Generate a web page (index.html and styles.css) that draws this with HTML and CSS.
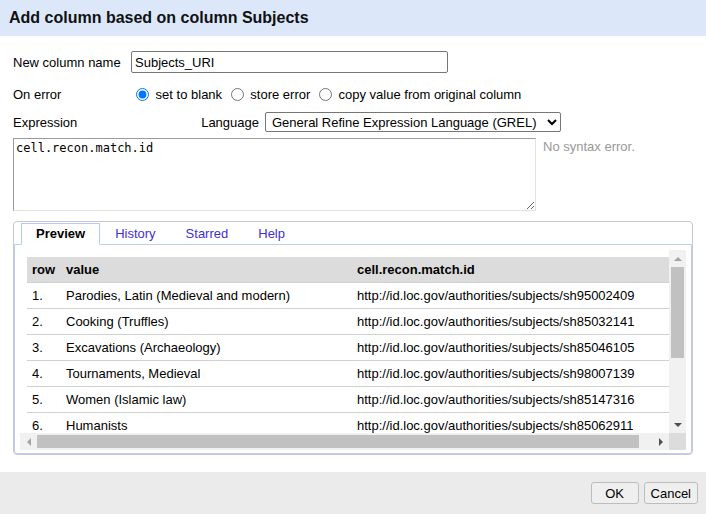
FILE: index.html
```html
<!DOCTYPE html>
<html>
<head>
<meta charset="utf-8">
<title>Add column</title>
<link rel="stylesheet" href="styles.css">
</head>
<body>
<div class="dialog">
  <div class="dialog-header">Add column based on column Subjects</div>
  <div class="dialog-body">
    <div class="form-row row-name">
      <label class="field-label">New column name</label>
      <input class="name-input" type="text" value="Subjects_URI">
    </div>
    <div class="form-row row-error">
      <span class="field-label">On error</span>
      <span class="radios"><input type="radio" name="onerror" checked> set to blank <input type="radio" name="onerror"> store error <input type="radio" name="onerror"> copy value from original column</span>
    </div>
    <div class="form-row row-expr">
      <span class="field-label">Expression</span>
      <span class="lang-group">
        <span class="lang-label">Language</span>
        <select class="lang-select"><option>General Refine Expression Language (GREL)</option></select>
      </span>
    </div>
    <div class="expr-row">
      <textarea class="expr-input" spellcheck="false">cell.recon.match.id</textarea>
      <span class="expr-status">No syntax error.</span>
    </div>
    <div class="tabs">
      <div class="tab-nav">
        <span class="tab tab-active">Preview</span>
        <span class="tab">History</span>
        <span class="tab">Starred</span>
        <span class="tab">Help</span>
      </div>
      <div class="tab-panel">
        <div class="scroller">
          <div class="viewport">
            <table class="preview-table">
              <thead>
                <tr><th class="c-row">row</th><th class="c-val">value</th><th class="c-res">cell.recon.match.id</th></tr>
              </thead>
              <tbody>
                <tr><td>1.</td><td>Parodies, Latin (Medieval and modern)</td><td>http://id.loc.gov/authorities/subjects/sh95002409</td></tr>
                <tr><td>2.</td><td>Cooking (Truffles)</td><td>http://id.loc.gov/authorities/subjects/sh85032141</td></tr>
                <tr><td>3.</td><td>Excavations (Archaeology)</td><td>http://id.loc.gov/authorities/subjects/sh85046105</td></tr>
                <tr><td>4.</td><td>Tournaments, Medieval</td><td>http://id.loc.gov/authorities/subjects/sh98007139</td></tr>
                <tr><td>5.</td><td>Women (Islamic law)</td><td>http://id.loc.gov/authorities/subjects/sh85147316</td></tr>
                <tr><td>6.</td><td>Humanists</td><td>http://id.loc.gov/authorities/subjects/sh85062911</td></tr>
              </tbody>
            </table>
          </div>
          <div class="vbar">
            <div class="sb-btn"><span class="arr arr-up"></span></div>
            <div class="vthumb"></div>
            <div class="sb-fill"></div>
            <div class="sb-btn"><span class="arr arr-down"></span></div>
          </div>
          <div class="hbar">
            <div class="sb-btn-h"><span class="arr arr-left"></span></div>
            <div class="hthumb"></div>
            <div class="sb-fill"></div>
            <div class="sb-btn-h"><span class="arr arr-right"></span></div>
          </div>
          <div class="corner"></div>
        </div>
      </div>
    </div>
  </div>
  <div class="dialog-footer">
    <button class="btn btn-ok">OK</button>
    <button class="btn">Cancel</button>
  </div>
</div>
</body>
</html>
```
FILE: styles.css
```css
html, body {
  margin: 0;
  padding: 0;
  background: #ffffff;
}
body {
  font-family: "Liberation Sans", Arial, sans-serif;
  font-size: 13px;
  color: #000;
}
.dialog {
  width: 706px;
  height: 514px;
  display: flex;
  flex-direction: column;
}
.dialog-header {
  height: 36px;
  line-height: 35px;
  padding-left: 9px;
  background: #dce8f9;
  font-weight: bold;
  font-size: 16px;
  color: #111;
  box-sizing: border-box;
}
.dialog-body {
  flex: 1;
  padding: 12px 13px 0 13px;
}
.form-row {
  display: flex;
  align-items: center;
}
.field-label {
  width: 118px;
  flex: none;
}
.row-name {
  height: 28px;
}
.name-input {
  width: 317px;
  height: 22px;
  box-sizing: border-box;
  border: 1px solid #767676;
  border-radius: 2px;
  padding: 0 3px;
  font-family: "Liberation Sans", Arial, sans-serif;
  font-size: 13px;
  margin: 0;
}
.row-error {
  height: 36px;
}
.radios {
  line-height: 15px;
}
.radios input {
  margin: 0 3px 0 5px;
  width: 13px;
  height: 13px;
  vertical-align: -2px;
}
.row-expr {
  height: 20px;
  width: 548px;
}
.lang-group {
  margin-left: auto;
  display: flex;
  align-items: center;
  gap: 6px;
}
.lang-select {
  width: 296px;
  height: 20px;
  box-sizing: border-box;
  border: 1px solid #767676;
  border-radius: 2px;
  padding: 0 0 0 2px;
  font-family: "Liberation Sans", Arial, sans-serif;
  font-size: 13px;
  background: #fff;
  color: #000;
  margin: 0;
}
.expr-row {
  display: flex;
  align-items: flex-start;
  margin-top: 6px;
}
.expr-input {
  width: 523px;
  height: 73px;
  box-sizing: border-box;
  margin: 0;
  padding: 2px 2px;
  border: 1px solid;
  border-color: #9a9a9a #e2e2e2 #e2e2e2 #9a9a9a;
  font-family: "DejaVu Sans Mono", "Liberation Mono", monospace;
  font-size: 12px;
  line-height: 15px;
  color: #000;
}
.expr-status {
  margin-left: 7px;
  color: #999;
  line-height: 15px;
  padding-top: 1px;
}
.tabs {
  margin-top: 10px;
  width: 680px;
  height: 234px;
  box-sizing: border-box;
  border: 1px solid #c8c8c8;
  border-radius: 4px;
  display: flex;
  flex-direction: column;
}
.tab-nav {
  display: flex;
  padding: 1px 0 0 7px;
  height: 22px;
  box-sizing: border-box;
}
.tab {
  height: 22px;
  box-sizing: border-box;
  border: 1px solid transparent;
  padding: 0 14px;
  line-height: 20px;
  color: #3f2fd6;
  margin-bottom: -1px;
  position: relative;
  z-index: 1;
}
.tab-active {
  border-color: #b6cbf1;
  border-bottom-color: #fff;
  background: #fff;
  color: #000;
  font-weight: bold;
}
.tab-panel {
  flex: 1;
  border: 1px solid #bdd0f3;
  border-radius: 0 0 3px 3px;
  padding: 5px 5px 3px 5px;
  display: flex;
  flex-direction: column;
}
.scroller {
  display: grid;
  grid-template-columns: 649px 17px;
  grid-template-rows: 183px 17px;
}
.viewport {
  overflow: hidden;
  padding: 7px 0 0 7px;
  box-sizing: border-box;
}
.preview-table {
  border-collapse: separate;
  border-spacing: 0;
  table-layout: fixed;
  width: 660px;
}
.preview-table th,
.preview-table td {
  height: 25px;
  padding: 0 5px;
  border-bottom: 1px solid #d0d0d0;
  text-align: left;
  white-space: nowrap;
  overflow: hidden;
}
.preview-table th {
  background: #dcdcdc;
  font-weight: bold;
}
.c-row { width: 24px; }
.c-val { width: 281px; }
.vbar {
  background: #f1f1f1;
  display: flex;
  flex-direction: column;
  align-items: center;
}
.sb-btn {
  height: 17px;
  width: 17px;
  display: flex;
  align-items: center;
  justify-content: center;
  flex: none;
}
.vthumb {
  width: 13px;
  height: 91px;
  background: #c1c1c1;
  flex: none;
}
.sb-fill {
  flex: 1;
}
.hbar {
  background: #f1f1f1;
  display: flex;
  align-items: center;
}
.sb-btn-h {
  width: 17px;
  height: 17px;
  display: flex;
  align-items: center;
  justify-content: center;
  flex: none;
}
.hthumb {
  height: 13px;
  width: 602px;
  background: #c1c1c1;
  flex: none;
}
.corner {
  background: #dcdcdc;
}
.arr {
  width: 0;
  height: 0;
  display: block;
}
.arr-up {
  border-left: 4px solid transparent;
  border-right: 4px solid transparent;
  border-bottom: 4px solid #a3a3a3;
}
.arr-down {
  border-left: 4px solid transparent;
  border-right: 4px solid transparent;
  border-top: 4px solid #505050;
}
.arr-left {
  border-top: 4px solid transparent;
  border-bottom: 4px solid transparent;
  border-right: 4px solid #a3a3a3;
}
.arr-right {
  border-top: 4px solid transparent;
  border-bottom: 4px solid transparent;
  border-left: 4px solid #505050;
}
.dialog-footer {
  height: 42px;
  background: #ebebeb;
  display: flex;
  justify-content: flex-end;
  align-items: flex-start;
  padding: 10px 8px 0 0;
  box-sizing: border-box;
  gap: 5px;
}
.btn {
  height: 22px;
  box-sizing: border-box;
  border: 1px solid #bdbdbd;
  border-radius: 3px;
  background: #efefef;
  font-family: "Liberation Sans", Arial, sans-serif;
  font-size: 13px;
  color: #000;
  padding: 0 6px;
  margin: 0;
}
.btn-ok {
  width: 48px;
}
```
